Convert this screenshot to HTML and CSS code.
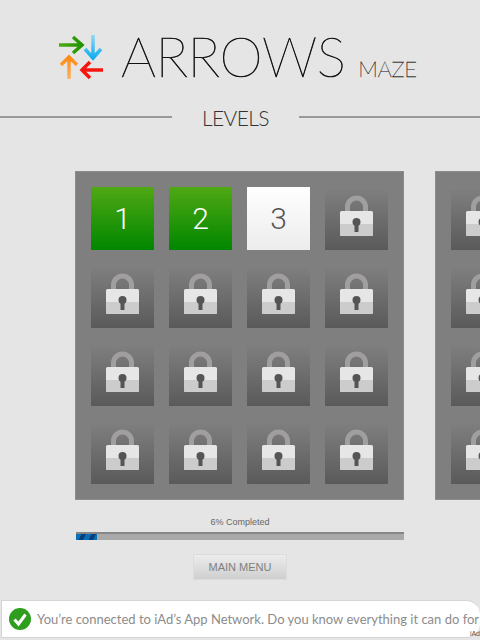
FILE: index.html
```html
<!DOCTYPE html>
<html lang="en">
<head>
    <meta charset="UTF-8">
    <meta name="viewport" content="width=device-width, initial-scale=1.0">
    <title>Arrows Maze Levels</title>
    <link rel="stylesheet" href="styles.css">
</head>
<body>
    <svg class="sprites" width="0" height="0">
        <defs>
            <linearGradient id="cyanGrad" x1="0" y1="0" x2="0" y2="1">
                <stop offset="0" stop-color="#8fd8f5"/>
                <stop offset="1" stop-color="#11aeee"/>
            </linearGradient>
            <linearGradient id="orangeGrad" x1="0" y1="0" x2="0" y2="1">
                <stop offset="0" stop-color="#ff8a14"/>
                <stop offset="1" stop-color="#ffb25e"/>
            </linearGradient>
            <linearGradient id="greenGrad" x1="0" y1="0" x2="1" y2="0">
                <stop offset="0" stop-color="#52ab12"/>
                <stop offset="1" stop-color="#1f9400"/>
            </linearGradient>
            <symbol id="lock" viewBox="0 0 63 63">
                <path d="M22.500 26V20a9 9 0 0 1 18 0V26" fill="none" stroke="#a09e9e" stroke-width="5"/>
                <rect x="15" y="24" width="33" height="25" rx="1.500" fill="#e6e6e6"/>
                <path d="M15 37H48V47.500a1.500 1.500 0 0 1-1.500 1.500H16.500a1.500 1.500 0 0 1-1.500-1.500Z" fill="#cccccc"/>
                <circle cx="31.500" cy="35" r="4" fill="#555"/>
                <rect x="29.500" y="36" width="4" height="9" fill="#555"/>
            </symbol>
        </defs>
    </svg>

    <div class="logo">
        <svg class="logo-icon" width="46" height="46" viewBox="0 0 46 46">
            <path d="M1 11H24M15 3L24 11L15 19" stroke="url(#greenGrad)" stroke-width="3.500" fill="none"/>
            <path d="M35 1V24M27 15L35 24L43 15" stroke="url(#cyanGrad)" stroke-width="3.500" fill="none"/>
            <path d="M11 23V45M3 31L11 23L19 31" stroke="url(#orangeGrad)" stroke-width="3.500" fill="none"/>
            <path d="M24 36H45M32 28L24 36L32 44" stroke="#f5170f" stroke-width="3.500" fill="none"/>
        </svg>
        <span class="logo-title">ARROWS</span>
        <span class="logo-sub">MAZE</span>
    </div>

    <div class="section-title">
        <span class="rule rule-left"></span>
        <span class="section-name">LEVELS</span>
        <span class="rule rule-right"></span>
    </div>

    <div class="panels">
        <div class="panel">
            <div class="cell done">1</div>
            <div class="cell done">2</div>
            <div class="cell open">3</div>
            <div class="cell"><svg class="lock"><use href="#lock"/></svg></div>
            <div class="cell"><svg class="lock"><use href="#lock"/></svg></div>
            <div class="cell"><svg class="lock"><use href="#lock"/></svg></div>
            <div class="cell"><svg class="lock"><use href="#lock"/></svg></div>
            <div class="cell"><svg class="lock"><use href="#lock"/></svg></div>
            <div class="cell"><svg class="lock"><use href="#lock"/></svg></div>
            <div class="cell"><svg class="lock"><use href="#lock"/></svg></div>
            <div class="cell"><svg class="lock"><use href="#lock"/></svg></div>
            <div class="cell"><svg class="lock"><use href="#lock"/></svg></div>
            <div class="cell"><svg class="lock"><use href="#lock"/></svg></div>
            <div class="cell"><svg class="lock"><use href="#lock"/></svg></div>
            <div class="cell"><svg class="lock"><use href="#lock"/></svg></div>
            <div class="cell"><svg class="lock"><use href="#lock"/></svg></div>
        </div>
        <div class="panel">
            <div class="cell"><svg class="lock"><use href="#lock"/></svg></div>
            <div class="cell"></div><div class="cell"></div><div class="cell"></div>
            <div class="cell"><svg class="lock"><use href="#lock"/></svg></div>
            <div class="cell"></div><div class="cell"></div><div class="cell"></div>
            <div class="cell"><svg class="lock"><use href="#lock"/></svg></div>
            <div class="cell"></div><div class="cell"></div><div class="cell"></div>
            <div class="cell"><svg class="lock"><use href="#lock"/></svg></div>
            <div class="cell"></div><div class="cell"></div><div class="cell"></div>
        </div>
    </div>

    <div class="progress-label">6% Completed</div>
    <div class="progress"><div class="progress-fill"></div></div>

    <div class="menu-row"><button type="button" class="menu-button">MAIN MENU</button></div>

    <div class="ad-banner">
        <svg class="ad-check" width="24" height="24" viewBox="0 0 24 24">
            <circle cx="12" cy="12" r="11" fill="#2f9e1e"/>
            <path d="M6.500 12.500L10.500 17L17.500 7.500" fill="none" stroke="#fff" stroke-width="3"/>
        </svg>
        <span class="ad-text">You’re connected to iAd’s App Network. Do you know everything it can do for you?</span>
        <span class="ad-mark">iAd</span>
    </div>
</body>
</html>
```

FILE: styles.css
```css
html, body {
    height: 640px;
    overflow: hidden;
}
body {
    font-family: "Liberation Sans", Arial, sans-serif;
    background-color: #e5e5e5;
    margin: 0;
    width: 480px;
}
.sprites {
    display: block;
    height: 0;
}
.logo {
    display: flex;
    align-items: flex-end;
    height: 50px;
    padding: 30px 0 0 58px;
    color: #111;
    font-family: "Lato", sans-serif;
}
.logo-icon {
    flex: none;
}
.logo-title {
    margin-left: 17px;
    font-size: 55px;
    font-weight: 100;
    line-height: 50px;
    margin-bottom: -1px;
    letter-spacing: -0.5px;
    -webkit-text-stroke: 0.6px #111;
}
.logo-sub {
    margin-left: 13px;
    font-size: 22px;
    font-weight: 100;
    line-height: 22px;
    letter-spacing: -0.2px;
    -webkit-text-stroke: 0.3px #111;
}
.section-title {
    display: flex;
    align-items: center;
    height: 24px;
    margin-top: 25px;
}
.rule {
    height: 2px;
    background-color: #999;
}
.rule-left {
    width: 172px;
}
.rule-right {
    flex: 1;
}
.section-name {
    width: 127px;
    text-align: center;
    font-family: "Lato", sans-serif;
    font-size: 21px;
    font-weight: 300;
    letter-spacing: -0.6px;
    color: #333;
}
.panels {
    display: flex;
    gap: 31px;
    margin-top: 42px;
    padding-left: 75px;
    overflow: hidden;
}
.panel {
    display: grid;
    flex: none;
    grid-template-columns: repeat(4, 63px);
    grid-auto-rows: 63px;
    gap: 15px;
    padding: 15px;
    background-color: #7f7f7f;
    border: 1px solid #8c8c8c;
}
.cell {
    display: flex;
    align-items: center;
    justify-content: center;
    background: linear-gradient(#808080, #5a5a5a);
    font-family: "Roboto", sans-serif;
    font-weight: 300;
    font-size: 30px;
}
.cell.done {
    background: linear-gradient(#50a814, #008600);
    color: #fff;
}
.cell.open {
    background: linear-gradient(#ffffff, #ececec);
    color: #555;
}
.lock {
    width: 63px;
    height: 63px;
}
.progress-label {
    margin-top: 16px;
    text-align: center;
    font-size: 9px;
    line-height: 12px;
    color: #666;
}
.progress {
    height: 6px;
    margin: 4px 76px 0;
    background-color: #a9a9a9;
    border-top: 2px solid #878787;
}
.progress-fill {
    width: 21px;
    height: 6px;
    background: repeating-linear-gradient(115deg, #0a6fb8 0, #0a6fb8 5px, #0b3f78 5px, #0b3f78 9px);
}
.menu-row {
    display: flex;
    justify-content: center;
    margin-top: 14px;
}
.menu-button {
    width: 94px;
    height: 26px;
    padding: 0;
    background: linear-gradient(#ececec, #cfcfcf);
    border: 1px solid #dcdcdc;
    font-family: "Liberation Sans", Arial, sans-serif;
    font-size: 11px;
    color: #808080;
}
.ad-banner {
    position: relative;
    display: flex;
    align-items: center;
    gap: 5px;
    height: 36px;
    margin: 20px 0 0 1px;
    padding-left: 6px;
    background-color: #fff;
    border: 1px solid #d4d4d4;
    border-right: 0;
    border-top-right-radius: 14px;
    border-bottom-right-radius: 14px;
}
.ad-check {
    flex: none;
}
.ad-text {
    font-family: "Lato", sans-serif;
    font-size: 13px;
    color: #8c8c8c;
    white-space: nowrap;
}
.ad-mark {
    position: absolute;
    right: 0;
    bottom: -1px;
    font-size: 7px;
    line-height: 8px;
    color: #555;
}
```
